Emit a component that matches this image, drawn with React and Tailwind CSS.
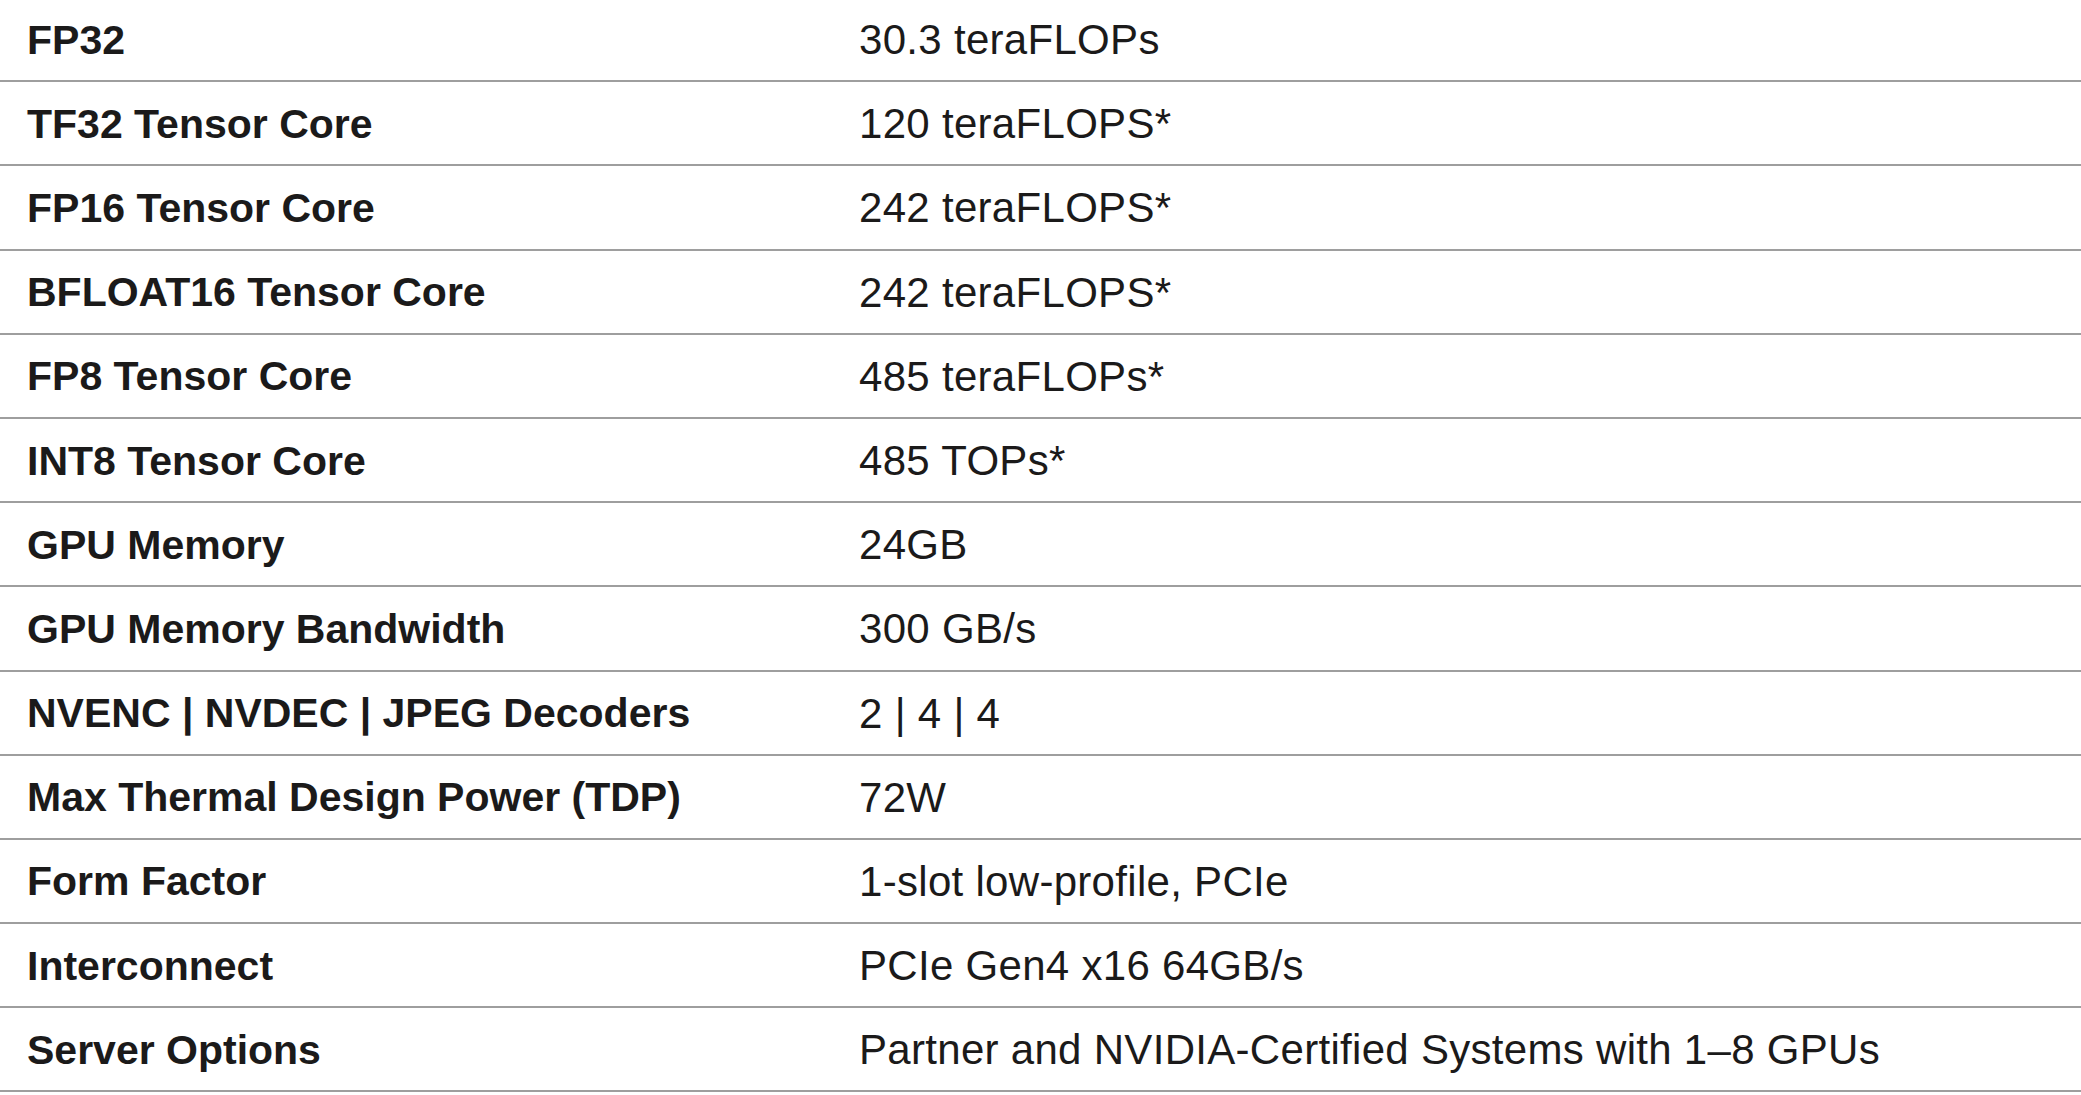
import React from 'react';

const specs = [
    ['FP32', '30.3 teraFLOPs'],
    ['TF32 Tensor Core', '120 teraFLOPS*'],
    ['FP16 Tensor Core', '242 teraFLOPS*'],
    ['BFLOAT16 Tensor Core', '242 teraFLOPS*'],
    ['FP8 Tensor Core', '485 teraFLOPs*'],
    ['INT8 Tensor Core', '485 TOPs*'],
    ['GPU Memory', '24GB'],
    ['GPU Memory Bandwidth', '300 GB/s'],
    ['NVENC | NVDEC | JPEG Decoders', '2 | 4 | 4'],
    ['Max Thermal Design Power (TDP)', '72W'],
    ['Form Factor', '1-slot low-profile, PCIe'],
    ['Interconnect', 'PCIe Gen4 x16 64GB/s'],
    ['Server Options', 'Partner and NVIDIA-Certified Systems with 1–8 GPUs'],
];

const App = () => {
    return (
        <div className="w-full min-h-screen bg-white overflow-hidden text-[#1b1a1a] font-['Liberation_Sans',Arial,sans-serif]">
            {/* first row is cut off at the top of the capture */}
            <div className="-mt-[2px]">
                {specs.map(([label, value]) => (
                    <div key={label} className="grid grid-cols-[859px_1fr] items-center h-[84.2px] border-b-2 border-[#9e9e9e]">
                        <div className="pl-[27px] pt-[2px] text-[41px] font-bold leading-none">{label}</div>
                        <div className="pt-[2px] text-[42px] tracking-[0.3px] leading-none">{value}</div>
                    </div>
                ))}
            </div>
        </div>
    );
};

export default App;
